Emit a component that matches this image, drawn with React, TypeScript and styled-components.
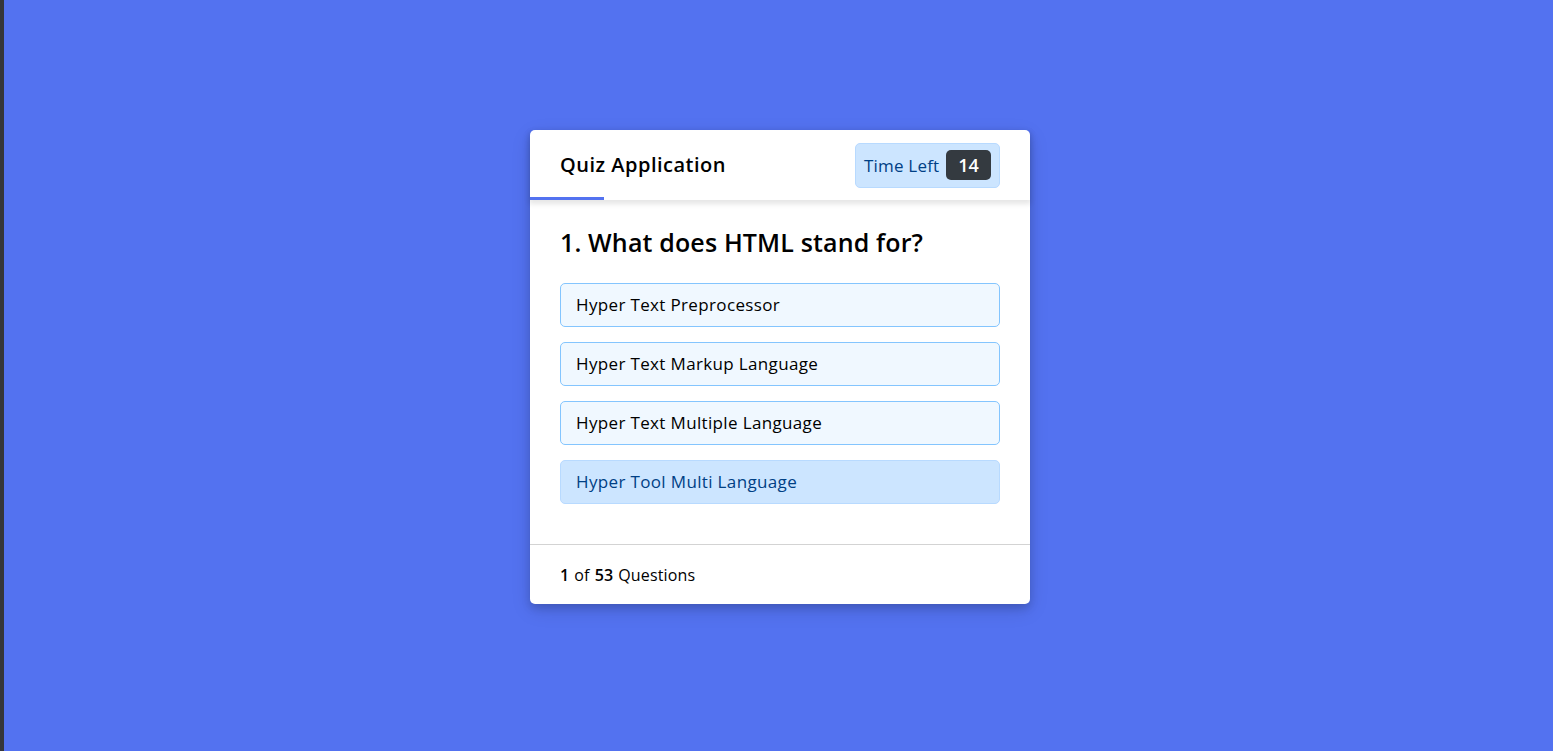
import React from "react";
import styled, { createGlobalStyle } from "styled-components";

const Global = createGlobalStyle`
  * { box-sizing: border-box; margin: 0; padding: 0; }
  html, body { height: 100%; }
  body {
    background: #5372f0;
    border-left: 4px solid #35363a;
    font-family: "Open Sans", "Noto Sans", sans-serif;
    color: #000;
  }
`;

const Page = styled.div`
  min-height: 751px;
  display: flex;
  justify-content: center;
  align-items: flex-start;
  padding: 130px 0 0 3px;
`;

const Card = styled.div`
  width: 500px;
  background: #fff;
  border-radius: 5px;
  box-shadow: 0 4px 8px 0 rgba(0, 0, 0, 0.15), 0 6px 20px 0 rgba(0, 0, 0, 0.12);
`;

const Header = styled.header`
  position: relative;
  height: 70px;
  padding: 0 30px;
  display: flex;
  align-items: center;
  justify-content: space-between;
  box-shadow: 0px 3px 5px 1px rgba(0, 0, 0, 0.1);
  z-index: 1;
`;

const Title = styled.div`
  font-size: 20px;
  font-weight: 600;
  letter-spacing: 0.5px;
  line-height: 26px;
  margin-top: -1px;
`;

const Timer = styled.div`
  color: #004085;
  background: #cce5ff;
  border: 1px solid #b8daff;
  height: 45px;
  width: 145px;
  padding: 0 8px;
  border-radius: 5px;
  display: flex;
  align-items: center;
  justify-content: space-between;
`;

const TimerLabel = styled.span`
  font-size: 17px;
  font-weight: 400;
  letter-spacing: 0.2px;
`;

const TimerSec = styled.span`
  font-size: 18px;
  font-weight: 600;
  height: 30px;
  width: 45px;
  color: #fff;
  border-radius: 5px;
  line-height: 30px;
  text-align: center;
  background: #343a40;
`;

const TimeLine = styled.div`
  position: absolute;
  bottom: 0;
  left: 0;
  height: 3px;
  background: #5372f0;
`;

const Section = styled.section`
  padding: 25px 30px 20px 30px;
`;

const Question = styled.h2`
  font-size: 25px;
  font-weight: 600;
  line-height: 34px;
  margin-bottom: 4px;
  letter-spacing: 0.15px;
`;

const OptionList = styled.div`
  padding: 20px 0;
  display: flex;
  flex-direction: column;
  gap: 15px;
`;

const Option = styled.div<{ $selected?: boolean }>`
  background: ${(p) => (p.$selected ? "#cce5ff" : "aliceblue")};
  border: 1px solid ${(p) => (p.$selected ? "#b8daff" : "#84c5fe")};
  color: ${(p) => (p.$selected ? "#004085" : "#000")};
  border-radius: 5px;
  padding: 8px 15px;
  font-size: 17px;
  line-height: 26px;
  letter-spacing: 0.35px;
`;

const Footer = styled.footer`
  height: 60px;
  padding: 0 30px;
  display: flex;
  align-items: center;
  border-top: 1px solid lightgrey;
  font-size: 16px;
  letter-spacing: 0.15px;
`;

const Num = styled.b`
  font-weight: 600;
  padding: 0 5px;
  &:first-child { padding-left: 0; }
`;

const options = [
  "Hyper Text Preprocessor",
  "Hyper Text Markup Language",
  "Hyper Text Multiple Language",
  "Hyper Tool Multi Language",
];

const timeWidth = 74;

export default function App() {
  return (
    <>
      <Global />
      <Page>
        <Card>
          <Header>
            <Title>Quiz Application</Title>
            <Timer>
              <TimerLabel>Time Left</TimerLabel>
              <TimerSec>14</TimerSec>
            </Timer>
            <TimeLine style={{ width: timeWidth }} />
          </Header>
          <Section>
            <Question>1. What does HTML stand for?</Question>
            <OptionList>
              {options.map((o, i) => (
                <Option key={o} $selected={i === 3}>
                  {o}
                </Option>
              ))}
            </OptionList>
          </Section>
          <Footer>
            <Num>1</Num>of<Num>53</Num>Questions
          </Footer>
        </Card>
      </Page>
    </>
  );
}
